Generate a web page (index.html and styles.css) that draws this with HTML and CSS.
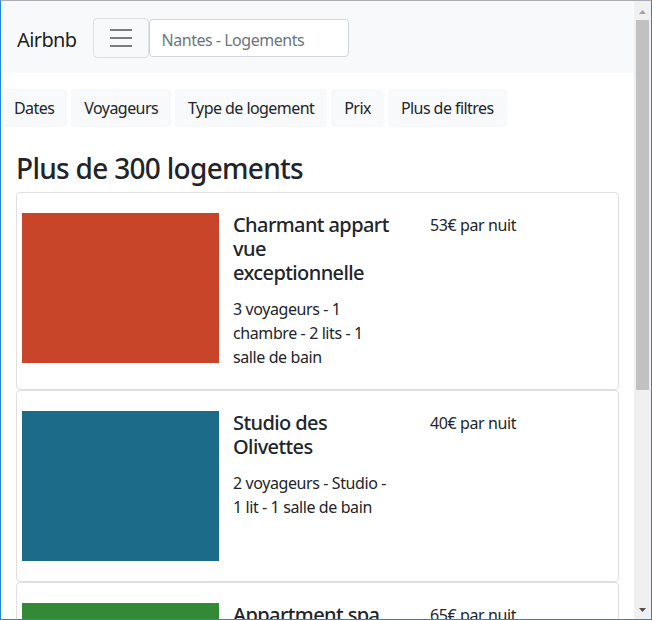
FILE: index.html
```html
<!DOCTYPE html>
<html lang="fr">
<head>
<meta charset="utf-8">
<title>Airbnb</title>
<link rel="stylesheet" href="styles.css">
</head>
<body>
<div class="frame">
  <div class="viewport">
    <nav class="navbar">
      <span class="brand">Airbnb</span>
      <button class="toggler" type="button" aria-label="Menu">
        <svg width="30" height="30" viewBox="0 0 30 30"><path d="M4 7h22M4 15h22M4 23h22" stroke="rgba(0,0,0,.5)" stroke-width="2" stroke-miterlimit="10"/></svg>
      </button>
      <input class="search" type="text" placeholder="Nantes - Logements">
    </nav>
    <div class="filters">
      <button class="btn" type="button">Dates</button>
      <button class="btn" type="button">Voyageurs</button>
      <button class="btn" type="button">Type de logement</button>
      <button class="btn" type="button">Prix</button>
      <button class="btn" type="button">Plus de filtres</button>
    </div>
    <main class="container">
      <h3 class="heading">Plus de 300 logements</h3>
      <div class="card">
        <div class="photo red"></div>
        <div class="info">
          <h5 class="card-title">Charmant appart vue exceptionnelle</h5>
          <p class="card-text">3 voyageurs - 1 chambre - 2 lits - 1 salle de bain</p>
        </div>
        <div class="price">53€ par nuit</div>
      </div>
      <div class="card">
        <div class="photo blue"></div>
        <div class="info">
          <h5 class="card-title">Studio des Olivettes</h5>
          <p class="card-text">2 voyageurs - Studio - 1 lit - 1 salle de bain</p>
        </div>
        <div class="price">40€ par nuit</div>
      </div>
      <div class="card">
        <div class="photo green"></div>
        <div class="info">
          <h5 class="card-title">Appartment spa avec jacuzzi</h5>
          <p class="card-text">4 voyageurs - 2 chambres - 2 lits - 1 salle de bain</p>
        </div>
        <div class="price">65€ par nuit</div>
      </div>
    </main>
  </div>
  <div class="scrollbar">
    <div class="sb-btn sb-up"><svg width="7" height="4" viewBox="0 0 7 4"><polygon points="0,4 3.5,0 7,4" fill="#a3a3a3"/></svg></div>
    <div class="sb-thumb"></div>
    <div class="sb-track"></div>
    <div class="sb-btn sb-down"><svg width="7" height="4" viewBox="0 0 7 4"><polygon points="0,0 7,0 3.5,4" fill="#505050"/></svg></div>
  </div>
</div>
</body>
</html>
```

FILE: styles.css
```css
* { box-sizing: border-box; }
html, body { margin: 0; padding: 0; overflow: hidden; }
body {
  font-family: "Noto Sans", "Open Sans", Arial, sans-serif;
  font-size: 16px;
  line-height: 1.5;
  letter-spacing: -0.025em;
  color: #212529;
  background: #fff;
}
.frame {
  width: 652px;
  height: 620px;
  display: flex;
  border-left: 1px solid #1f87dc;
  border-right: 1px solid #1f87dc;
  border-bottom: 1px solid #1f87dc;
  border-top: 1px solid #a9abae;
  overflow: hidden;
}
.viewport {
  flex: 1 1 auto;
  overflow: hidden;
  background: #fff;
}
.navbar {
  display: flex;
  align-items: center;
  background: #f8f9fa;
  padding: 17px 16px 15px;
}
.brand {
  font-size: 20px;
  line-height: 30px;
  padding: 7px 0 3px;
  margin-right: 16px;
  letter-spacing: -0.03em;
  color: rgba(0,0,0,.9);
}
.toggler {
  width: 56px;
  height: 40px;
  padding: 4px 12px;
  background: transparent;
  border: 1px solid rgba(0,0,0,.1);
  border-radius: 4px;
  display: flex;
  align-items: center;
  justify-content: center;
}
.toggler svg { display: block; }
.search {
  width: 200px;
  height: 38px;
  padding: 8px 12px 4px;
  font: inherit;
  letter-spacing: -0.03em;
  color: #495057;
  background: #fff;
  border: 1px solid #ced4da;
  border-radius: 4px;
}
.search::placeholder { color: #6c757d; opacity: 1; }
.filters {
  display: flex;
  gap: 4px;
  margin-top: 16px;
}
.btn {
  font: inherit;
  letter-spacing: -0.035em;
  color: #212529;
  background: #f8f9fa;
  border: 1px solid #f8f9fa;
  border-radius: 4px;
  padding: 6px 12px;
  height: 38px;
  line-height: 24px;
}
.container {
  padding: 0 15px;
}
.heading {
  font-size: 28px;
  font-weight: 500;
  line-height: 1.2;
  letter-spacing: -0.025em;
  margin: 25px 0 6px;
}
.card {
  display: flex;
  align-items: flex-start;
  border: 1px solid rgba(0,0,0,.125);
  border-radius: 4px;
  padding: 20px 5px;
}
.photo {
  flex: 0 0 197px;
  height: 150px;
}
.red { background: #c8452a; }
.blue { background: #1c6b88; }
.green { background: #328a36; }
.info {
  flex: 0 0 160px;
  margin-left: 14px;
}
.card-title {
  font-size: 20px;
  font-weight: 500;
  line-height: 1.2;
  letter-spacing: -0.03em;
  margin: 0 0 12px;
}
.card-text { margin: 0; }
.price {
  margin-left: 37px;
}
.scrollbar {
  flex: 0 0 17px;
  display: flex;
  flex-direction: column;
  background: #f0f0f0;
}
.sb-btn {
  display: flex;
  justify-content: center;
}
.sb-btn svg { display: block; }
.sb-up { height: 19px; padding-top: 9px; }
.sb-down { height: 17px; padding-top: 6px; }
.sb-thumb {
  height: 370px;
  margin: 0 2px;
  background: #c1c1c1;
}
.sb-track { flex: 1 1 auto; }
```
